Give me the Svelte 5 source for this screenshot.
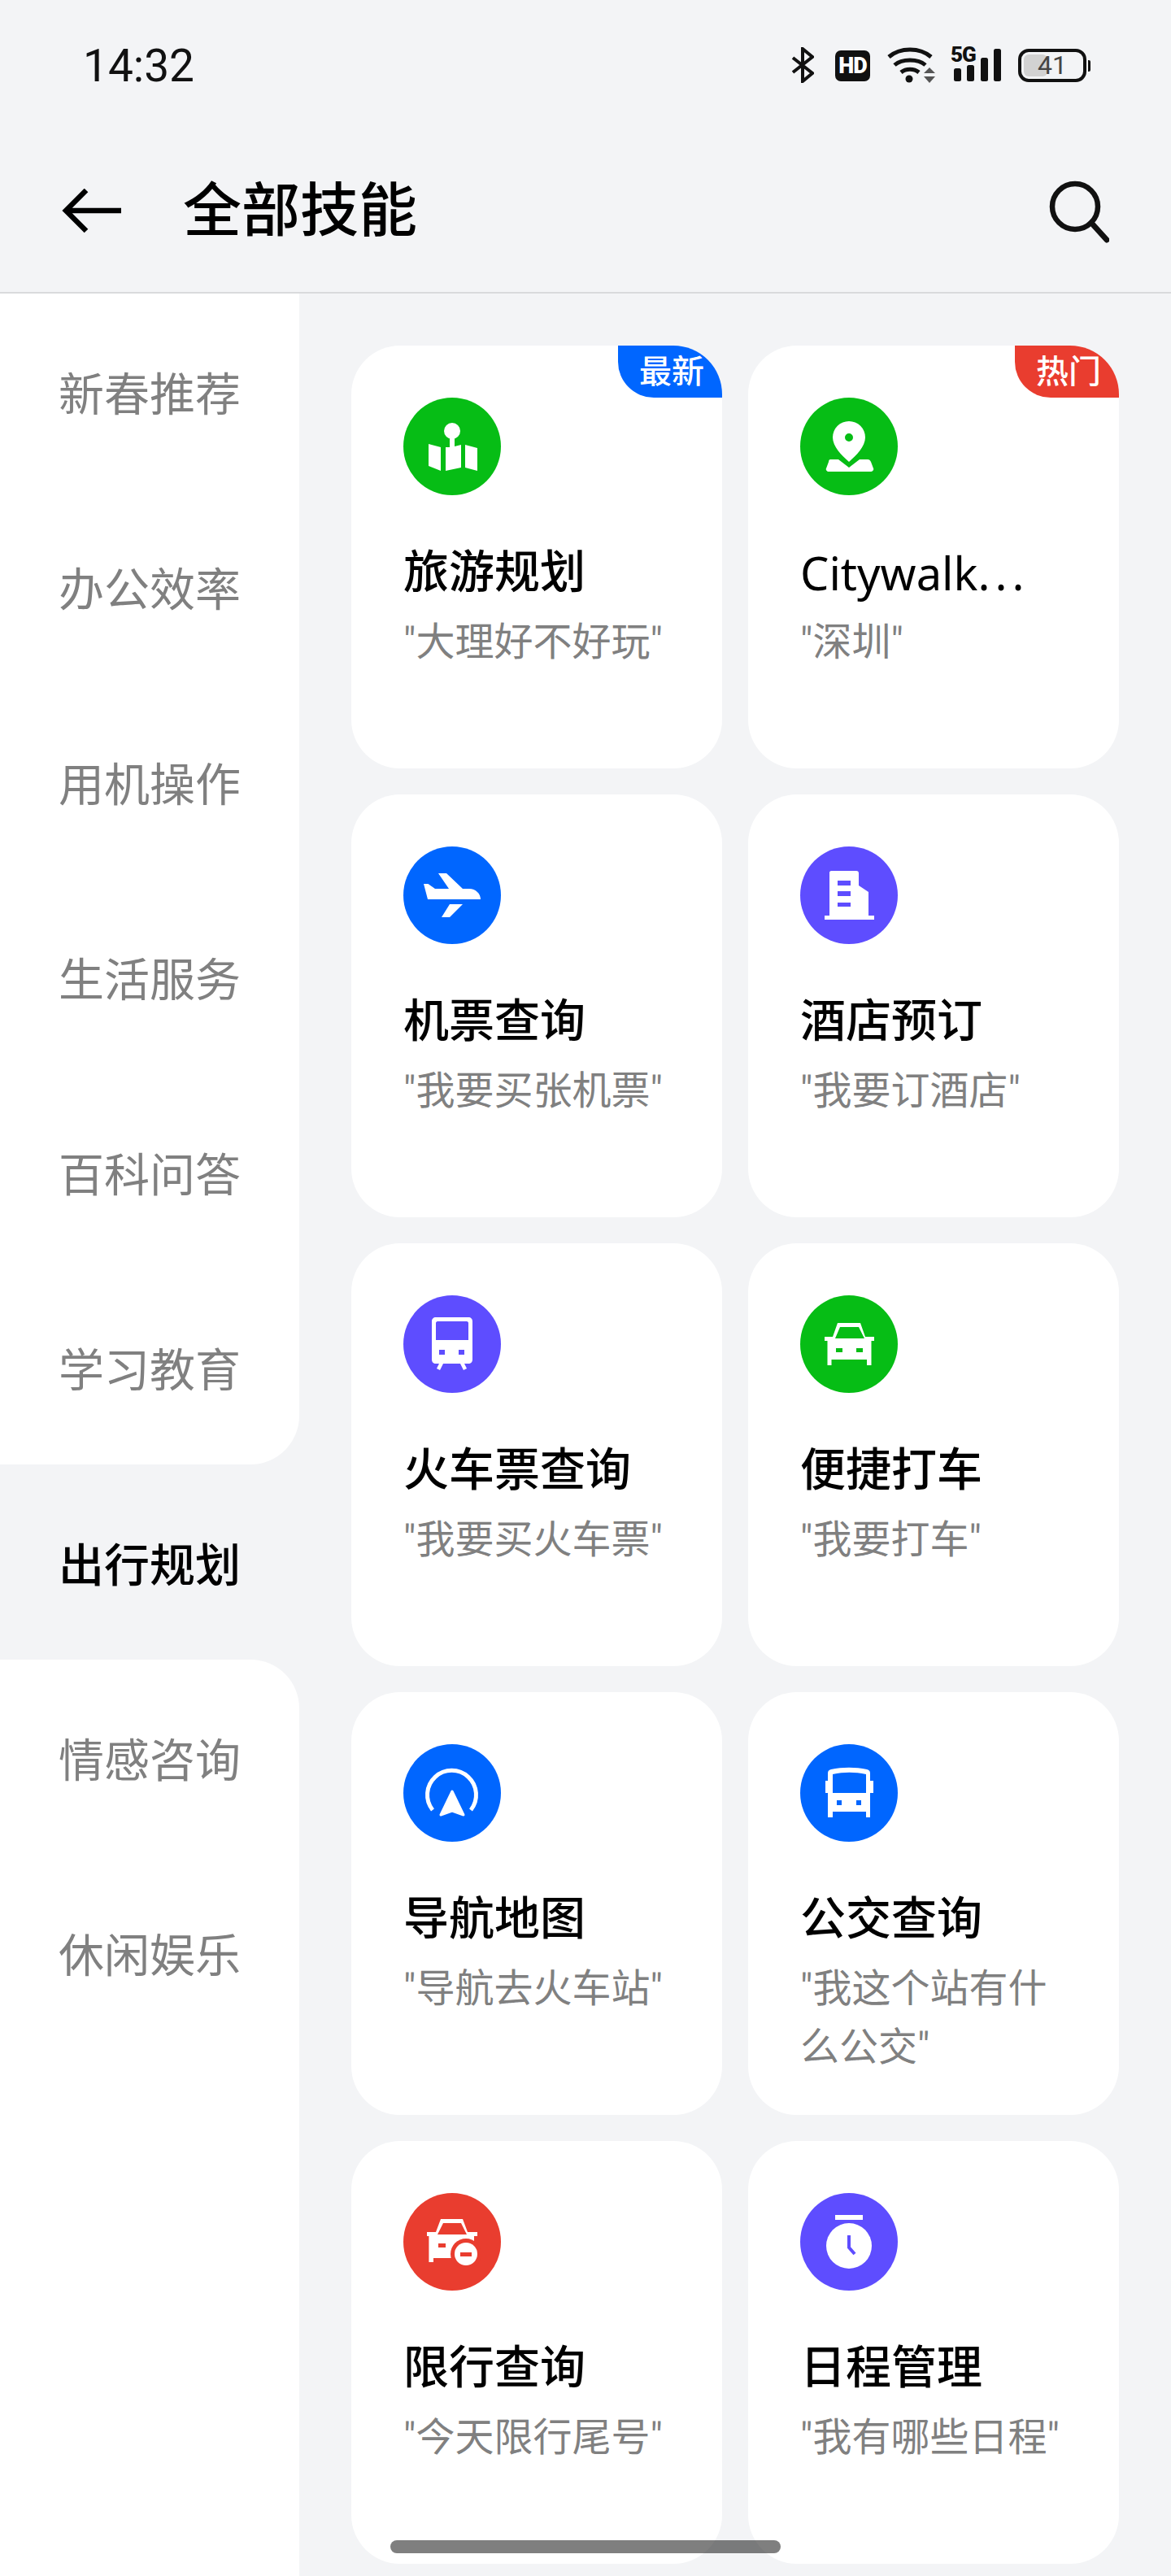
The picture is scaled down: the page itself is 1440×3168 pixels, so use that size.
<script>
    const categories = ['新春推荐', '办公效率', '用机操作', '生活服务', '百科问答', '学习教育', '出行规划', '情感咨询', '休闲娱乐'];
    const activeIndex = 6;

    const green = '#06bd15';
    const blue = '#0066ff';
    const purple = '#5e4dff';
    const red = '#e93d2f';

    const skills = [
        { title: '旅游规划', hint: '"大理好不好玩"', icon: 'map', color: green, badge: '最新', badgeColor: blue },
        { title: 'Citywalk', tail: '...', hint: '"深圳"', icon: 'pin', color: green, badge: '热门', badgeColor: red, latin: true },
        { title: '机票查询', hint: '"我要买张机票"', icon: 'plane', color: blue },
        { title: '酒店预订', hint: '"我要订酒店"', icon: 'hotel', color: purple },
        { title: '火车票查询', hint: '"我要买火车票"', icon: 'train', color: purple },
        { title: '便捷打车', hint: '"我要打车"', icon: 'car', color: green },
        { title: '导航地图', hint: '"导航去火车站"', icon: 'nav', color: blue },
        { title: '公交查询', hint: '"我这个站有什么公交"', icon: 'bus', color: blue },
        { title: '限行查询', hint: '"今天限行尾号"', icon: 'limit', color: red },
        { title: '日程管理', hint: '"我有哪些日程"', icon: 'timer', color: purple }
    ];
</script>

{#snippet glyph(name, color)}
    <svg class="skill-icon" viewBox="0 0 120 120" width="120" height="120">
        <circle cx="60" cy="60" r="60" fill={color} />
        {#if name === 'map'}
            <circle cx="60" cy="41" r="10" fill="#fff" />
            <path fill="#fff" d="M31 57l15 4v29l-15-6zM52 61h5V46h6v14l8-2v28l-19 4zM76 58l15 4v28l-15-4z" />
        {:else if name === 'pin'}
            <path fill="#fff" fill-rule="evenodd" d="M60 29a20 20 0 0 1 20 20c0 11-11 22-20 30-9-8-20-19-20-30a20 20 0 0 1 20-20zm0 15a5 5 0 1 0 0 10 5 5 0 0 0 0-10z" />
            <path fill="#fff" d="M37 76h10l13 10 13-10h10c2 0 3 1 4 3l3 8c1 2-1 4-3 4H35c-2 0-4-2-3-4l3-8c0-2 1-3 2-3z" />
        {:else if name === 'plane'}
            <path fill="#fff" d="M25 46h5.500l8.500 6h17l-13-19h10l20 19h8c8 0 14 6 14 13H30zM57 71h16L57 87H47z" />
        {:else if name === 'hotel'}
            <path fill="#fff" fill-rule="evenodd" d="M38 30h31c2 0 3 1 3 3v15l12 8v29h7v5H30v-5h6V32c0-1 1-2 2-2zm8 12v6h16v-6zm0 13v6h16v-6zm0 14v5h16v-5z" />
        {:else if name === 'train'}
            <path fill="#fff" fill-rule="evenodd" d="M40 27h40c3 0 5 2 5 5v47c0 3-2 5-5 5H40c-3 0-5-2-5-5V32c0-3 2-5 5-5zm2 5c-1 0-2 1-2 2v21h40V34c0-1-1-2-2-2zm2 35v6h7v-6zm24 0v6h7v-6z" />
            <path stroke="#fff" stroke-width="4.500" d="M47 83l-4 8M72 83l4 8" />
        {:else if name === 'car'}
            <path fill="#fff" fill-rule="evenodd" d="M46 34h28l6 17h11v5h-3.500v30H82v-7H38.500v7h-5V56H30v-5h10zm3 5l-6 14h36l-7-14zm-5 26v5h8v-5zm25 0v5h8v-5z" />
        {:else if name === 'nav'}
            <path fill="none" stroke="#fff" stroke-width="5" d="M36 81a30 30 0 1 1 47 0" />
            <path fill="#fff" stroke="#fff" stroke-width="3" stroke-linejoin="round" d="M60 58l14 29-14-5-14 5z" />
        {:else if name === 'bus'}
            <path fill="#fff" fill-rule="evenodd" d="M38 31c14-3 30-3 44 0 3 1 4 2 4 5v9h4v15h-4v30h-5v-7H40v7h-6V60h-3V45h3v-9c0-3 1-4 4-5zm2 6v23h41V37c-14-3-27-3-41 0zm5 32v6h6v-6zm24 0v6h6v-6z" />
        {:else if name === 'limit'}
            <path fill="#fff" fill-rule="evenodd" d="M46 32h27l6 16h12v5h-4v27H37v5h-5.600V53H29v-5h11zm3 5l-7 14h36l-7-14zm-6 25v5h9v-5z" />
            <circle cx="77" cy="75" r="19" fill={color} />
            <circle cx="77" cy="75" r="14" fill="#fff" />
            <rect x="70" y="73" width="14" height="5" fill={color} />
        {:else if name === 'timer'}
            <rect x="43" y="27" width="34" height="6" fill="#fff" />
            <circle cx="60" cy="65" r="28" fill="#fff" />
            <path fill="none" stroke={color} stroke-width="4" d="M60 52v15l7 8" />
        {/if}
    </svg>
{/snippet}

<div class="page">
    <header class="top">
        <div class="status">
            <span class="time">14:32</span>
            <div class="status-icons">
                <svg width="28" height="44" viewBox="0 0 28 44">
                    <path fill="none" stroke="#111" stroke-width="4" d="M2 13l24 19-12 10V2l12 10L2 31" />
                </svg>
                <span class="hd">HD</span>
                <svg width="60" height="46" viewBox="0 0 60 46">
                    <path fill="none" stroke="#111" stroke-width="5" d="M2 13c14-12 38-12 52 0M9 23c9-8 29-8 38 0M17 32c6-5 16-5 22 0" />
                    <circle cx="27" cy="40" r="4.500" fill="#111" />
                    <path fill="#555" d="M52 26l7 7H45zM45 37h14l-7 8z" />
                </svg>
                <div class="signal">
                    <span class="five-g">5G</span>
                    <svg width="58" height="42" viewBox="0 0 58 42">
                        <rect x="0" y="24" width="9" height="16" rx="2.500" fill="#111" />
                        <rect x="16" y="20" width="9" height="20" rx="2.500" fill="#111" />
                        <rect x="33" y="11" width="9" height="29" rx="2.500" fill="#111" />
                        <rect x="49" y="0" width="9" height="40" rx="2.500" fill="#111" />
                    </svg>
                </div>
                <div class="battery">
                    <div class="battery-body">
                        <div class="battery-fill"></div>
                        <span class="battery-num">41</span>
                    </div>
                    <div class="battery-nub"></div>
                </div>
            </div>
        </div>
        <div class="bar">
            <svg class="back" width="76" height="56" viewBox="0 0 76 56">
                <path fill="none" stroke="#000" stroke-width="6.500" d="M73 27H6M30 2L5 27l25 25" />
            </svg>
            <h1>全部技能</h1>
            <svg class="search" width="78" height="78" viewBox="0 0 78 78">
                <circle cx="36" cy="33" r="28" fill="none" stroke="#111" stroke-width="6.500" />
                <path stroke="#111" stroke-width="7" stroke-linecap="round" d="M56 53l19 21" />
            </svg>
        </div>
    </header>

    <main class="body">
        <nav class="side">
            {#each categories as name, i}
                <div
                    class="cat"
                    class:active={i === activeIndex}
                    class:before-active={i === activeIndex - 1}
                    class:after-active={i === activeIndex + 1}
                >{name}</div>
            {/each}
            <div class="side-rest"></div>
        </nav>

        <section class="grid">
            {#each skills as s}
                <article class="card">
                    {#if s.badge}
                        <span class="badge" style="background: {s.badgeColor}">{s.badge}</span>
                    {/if}
                    {@render glyph(s.icon, s.color)}
                    <h2 class:latin={s.latin}>{s.title}{#if s.tail}<span class="tail">{s.tail}</span>{/if}</h2>
                    <p>{s.hint}</p>
                </article>
            {/each}
        </section>
    </main>

    <div class="home"></div>
</div>

<style>
    :global(body) {
        margin: 0;
        background: #f3f4f6;
    }

    .page {
        position: relative;
        width: 1440px;
        height: 3168px;
        overflow: hidden;
        background: #f3f4f6;
        display: flex;
        flex-direction: column;
        font-family: Roboto, "Noto Sans CJK SC", sans-serif;
        color: #000;
    }

    .top {
        height: 361px;
        box-sizing: border-box;
        border-bottom: 2px solid #d9dadc;
        flex: none;
    }

    .status {
        height: 110px;
        display: flex;
        justify-content: space-between;
        align-items: flex-start;
        padding: 50px 99px 0 102px;
    }

    .time {
        font-size: 55px;
        line-height: 62px;
        color: #111;
    }

    .status-icons {
        display: flex;
        align-items: flex-start;
        padding-top: 7px;
    }

    .status-icons > svg:first-child {
        margin: 1px 0 0 0;
    }

    .hd {
        width: 43px;
        height: 38px;
        margin: 5px 0 0 26px;
        background: #111;
        border-radius: 7px;
        color: #fff;
        font-size: 27px;
        font-weight: 900;
        line-height: 38px;
        text-align: center;
        letter-spacing: -1px;
    }

    .status-icons > svg:nth-child(3) {
        margin-left: 21px;
    }

    .signal {
        position: relative;
        width: 62px;
        height: 44px;
        margin-left: 18px;
    }

    .signal svg {
        position: absolute;
        left: 4px;
        top: 3px;
    }

    .five-g {
        position: absolute;
        left: 0;
        top: -4px;
        font-size: 26px;
        line-height: 28px;
        font-weight: 900;
        color: #111;
        letter-spacing: -1px;
    }

    .battery {
        display: flex;
        align-items: center;
        margin: 3px 0 0 21px;
    }

    .battery-body {
        position: relative;
        width: 84px;
        height: 41px;
        box-sizing: border-box;
        border: 4px solid #111;
        border-radius: 13px;
    }

    .battery-fill {
        position: absolute;
        left: 3px;
        top: 3px;
        width: 29px;
        height: 27px;
        background: #d2d2d2;
        border-radius: 6px;
    }

    .battery-num {
        position: absolute;
        left: 0;
        right: 0;
        top: 0;
        text-align: center;
        font-size: 32px;
        line-height: 33px;
        color: #444;
    }

    .battery-nub {
        width: 3px;
        height: 14px;
        margin-left: 2px;
        background: #111;
        border-radius: 0 2px 2px 0;
    }

    .bar {
        height: 199px;
        display: flex;
        align-items: center;
        padding: 0 76px;
    }

    .back {
        margin-right: 73px;
        flex: none;
    }

    h1 {
        flex: 1;
        margin: 0;
        font-size: 72px;
        line-height: 104px;
        font-weight: 500;
    }

    .search {
        flex: none;
    }

    .body {
        flex: 1;
        display: flex;
        min-height: 0;
    }

    .side {
        width: 368px;
        flex: none;
        display: flex;
        flex-direction: column;
    }

    .cat {
        height: 240px;
        flex: none;
        background: #fff;
        color: #808080;
        font-size: 56px;
        line-height: 250px;
        text-align: center;
        overflow: hidden;
    }

    .cat.active {
        background: transparent;
        color: #000;
        font-weight: 500;
    }

    .cat.before-active {
        border-bottom-right-radius: 60px;
    }

    .cat.after-active {
        border-top-right-radius: 60px;
    }

    .side-rest {
        flex: 1;
        background: #fff;
    }

    .grid {
        display: grid;
        grid-template-columns: 456px 456px;
        grid-auto-rows: 520px;
        gap: 32px;
        padding: 64px 0 0 64px;
    }

    .card {
        position: relative;
        box-sizing: border-box;
        padding: 64px 64px 0;
        background: #fff;
        border-radius: 60px;
        overflow: hidden;
    }

    .badge {
        position: absolute;
        right: 0;
        top: 0;
        width: 128px;
        height: 64px;
        border-bottom-left-radius: 44px;
        color: #fff;
        font-size: 40px;
        font-weight: 500;
        line-height: 66px;
        text-align: center;
        text-indent: 4px;
    }

    .skill-icon {
        display: block;
    }

    h2 {
        margin: 59px 0 0;
        font-size: 56px;
        line-height: 72px;
        font-weight: 500;
        white-space: nowrap;
    }

    h2.latin {
        font-family: "Noto Sans", "Noto Sans CJK SC", sans-serif;
        font-weight: 400;
    }

    .tail {
        letter-spacing: 6px;
    }

    p {
        margin: 14px 0 0;
        font-size: 48px;
        line-height: 72px;
        color: #808080;
    }

    .home {
        position: absolute;
        left: 480px;
        top: 3124px;
        width: 480px;
        height: 16px;
        border-radius: 8px;
        background: rgba(0, 0, 0, 0.5);
    }
</style>
